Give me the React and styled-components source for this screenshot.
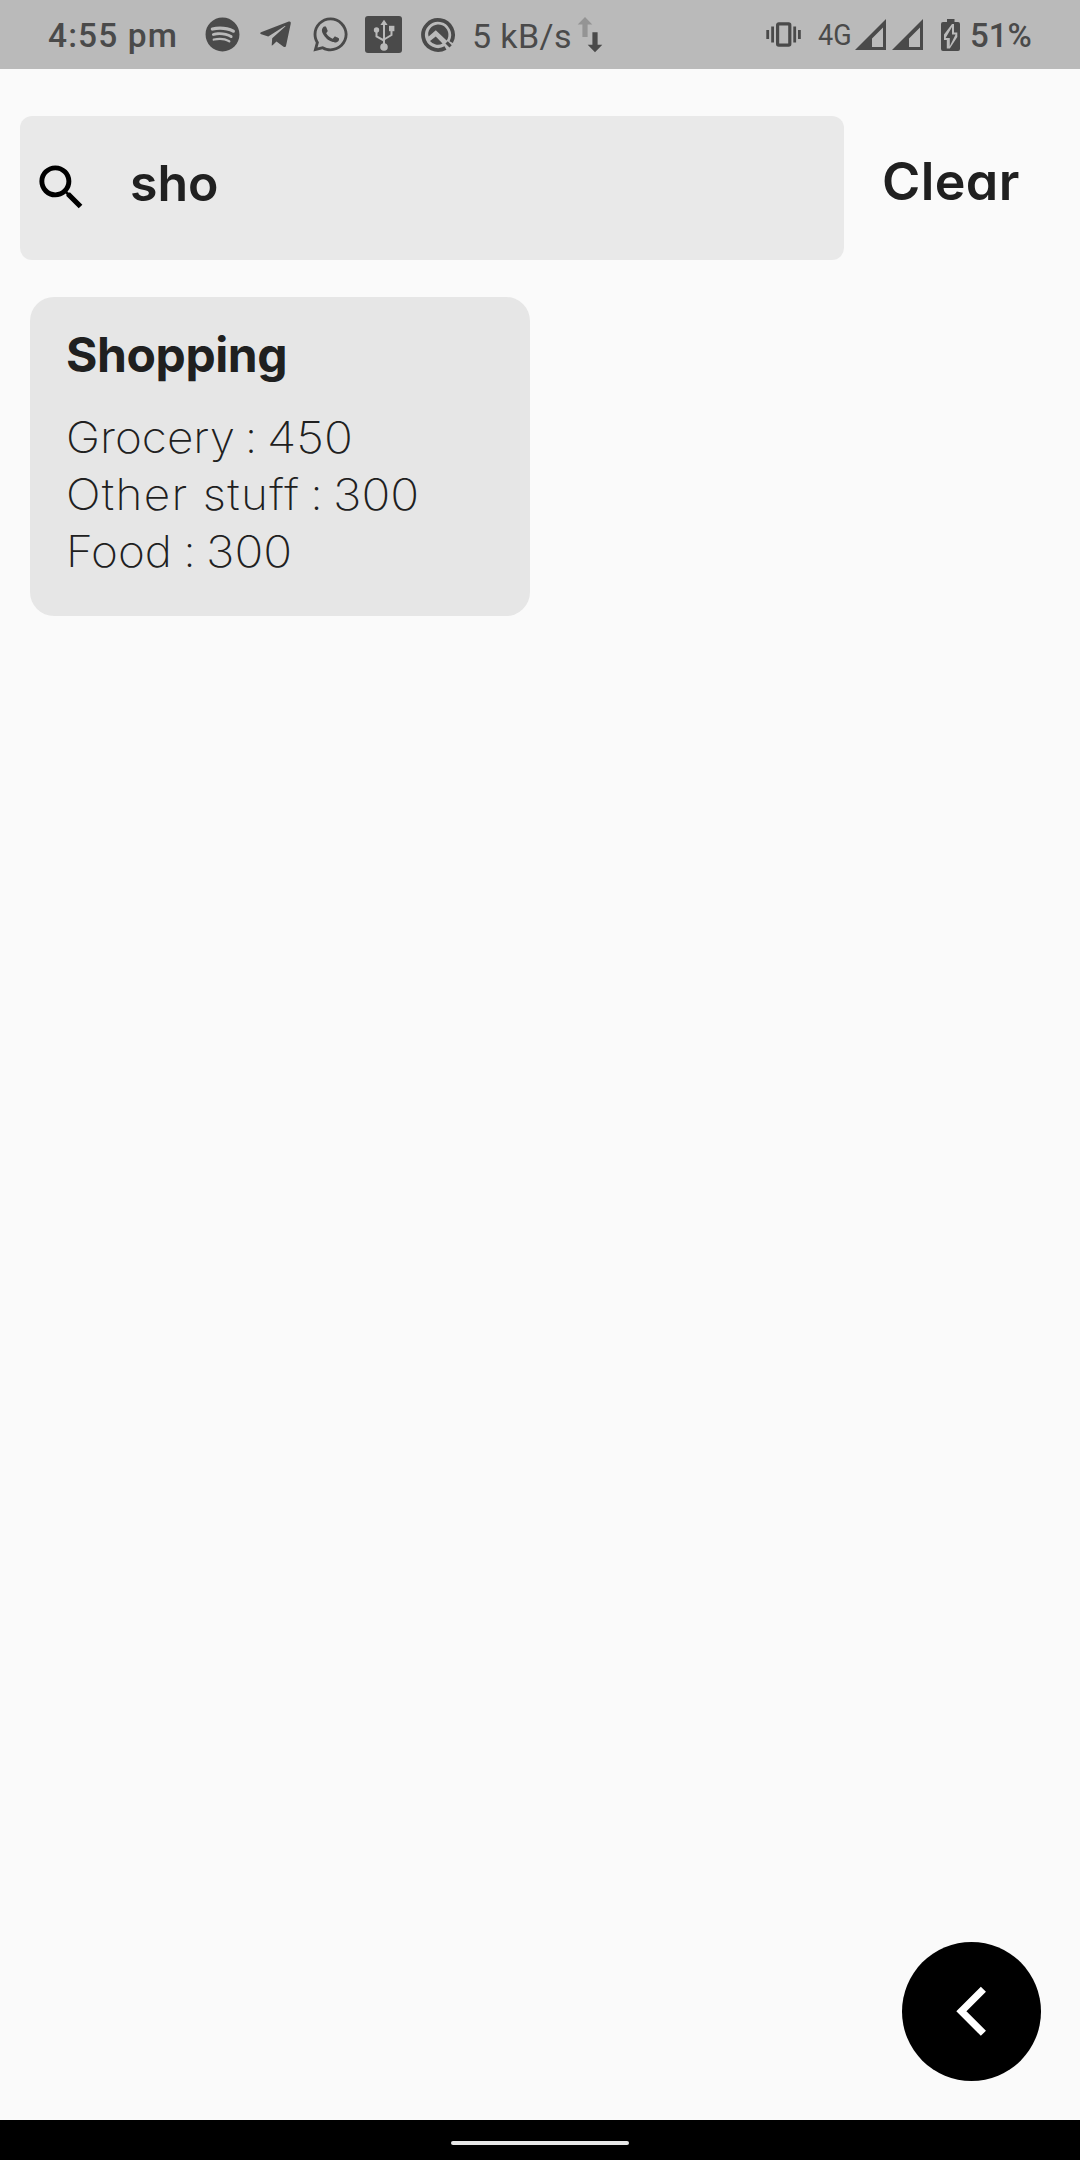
import React from "react";
import styled, { createGlobalStyle } from "styled-components";
import { FaSpotify, FaTelegramPlane, FaWhatsapp } from "react-icons/fa";
import { MdSearch } from "react-icons/md";

const GlobalStyle = createGlobalStyle`
  * { box-sizing: border-box; }
  body { margin: 0; background: #fafafa; font-family: Inter, "Liberation Sans", sans-serif; color: #202020; }
`;

const Screen = styled.div`
  width: 1080px;
  height: 2160px;
  display: flex;
  flex-direction: column;
  background: #fafafa;
`;

const StatusBar = styled.header`
  height: 69px;
  flex: none;
  display: flex;
  justify-content: space-between;
  padding: 0 48px;
  background: #bababa;
  color: #4a4a4a;
  font-family: Roboto, sans-serif;
`;

const StatusGroup = styled.div`
  display: flex;
  align-items: center;
  height: 69px;
  svg { display: block; flex: none; }
`;

const StatusText = styled.span`
  font-size: ${(p) => p.$size}px;
  font-weight: ${(p) => p.$weight || 400};
  letter-spacing: ${(p) => p.$track || 0}px;
  width: ${(p) => p.$width}px;
  margin-left: ${(p) => p.$gap || 0}px;
  line-height: 40px;
  padding-top: 2px;
  white-space: nowrap;
`;

const NetworkLabel = styled(StatusText)`
  transform: scaleX(0.9);
  transform-origin: left;
  padding-top: 0;
`;

const StatusIcon = styled.span`
  display: flex;
  margin-left: ${(p) => p.$gap}px;
`;

const SearchRow = styled.div`
  display: flex;
  padding: 47px 20px 0;
`;

const SearchBox = styled.div`
  width: 824px;
  height: 143.5px;
  display: flex;
  align-items: center;
  padding-left: 12px;
  border-radius: 12px;
  background: #e9e9e9;
`;

const SearchIcon = styled(MdSearch)`
  width: 59px;
  height: 59px;
  color: #000;
`;

const Query = styled.span`
  margin-left: 39px;
  padding-bottom: 10px;
  font-size: 50px;
  font-weight: 600;
  line-height: 60px;
`;

const ClearButton = styled.button`
  height: 132px;
  margin-left: 38px;
  padding: 0;
  border: 0;
  background: none;
  color: #202020;
  font: 600 52px/60px Inter, sans-serif;
  font-feature-settings: "cv11";
  letter-spacing: 0.4px;
`;

const Results = styled.main`
  flex: 1;
  padding: 37.5px 30px 0;
`;

const NoteCard = styled.article`
  width: 500px;
  height: 319px;
  padding: 30px 36px;
  border-radius: 24px;
  background: #e6e6e6;
`;

const NoteTitle = styled.h2`
  margin: 0;
  font-size: 48px;
  font-weight: 650;
  line-height: 56px;
  letter-spacing: -0.4px;
`;

const NoteLines = styled.div`
  padding-top: 26px;
  font-size: 43.5px;
  font-weight: 200;
  line-height: 57px;
  font-feature-settings: "calt" 0;
`;

const NoteLine = styled.div`
  display: flex;
  white-space: pre;
`;

const Label = styled.span`
  width: ${(p) => p.$width}px;
  letter-spacing: ${(p) => p.$track}px;
  transform: scaleX(1.055);
  transform-origin: left;
`;

const Colon = styled.span`
  width: 22px;
`;

const Amount = styled.span`
  transform: scaleX(1.1);
  transform-origin: left;
`;

const BottomArea = styled.div`
  display: flex;
  justify-content: flex-end;
  padding: 0 39.5px 39.5px 0;
`;

const BackButton = styled.button`
  width: 139px;
  height: 139px;
  padding: 0;
  border: 0;
  border-radius: 50%;
  background: #000;
  svg { display: block; }
`;

const NavBar = styled.footer`
  height: 40px;
  flex: none;
  display: flex;
  justify-content: center;
  padding-top: 21px;
  background: #000;
`;

const NavPill = styled.div`
  width: 178px;
  height: 4px;
  border-radius: 2px;
  background: #e8e8e8;
`;

const UsbIcon = () => (
  <svg width="37" height="37" viewBox="0 0 37 37" fill="none">
    <rect width="37" height="37" rx="3" fill="#4a4a4a" />
    <g stroke="#bababa" strokeWidth="2">
      <path d="M19 8v22M11.5 15v5.5L19 24.5M26.5 13v6L19 23.5" />
    </g>
    <g fill="#bababa">
      <path d="M19 3.8 22.6 9h-7.2z" />
      <circle cx="11.5" cy="14" r="2.7" />
      <rect x="24" y="9.8" width="5.4" height="5.4" />
      <circle cx="19" cy="31" r="3.8" />
    </g>
  </svg>
);

const QIcon = () => (
  <svg width="36" height="36" viewBox="0 0 36 36" fill="none">
    <path d="M25.5 31A15 15 0 1 1 31.2 25.2" stroke="#4a4a4a" strokeWidth="3.8" />
    <path d="M8.2 16A10.2 10.2 0 1 1 26.6 23.6L15.8 13.2 8.6 19.6A10 10 0 0 1 8.2 16Z" fill="#4a4a4a" />
    <path d="M10 24 15.8 19.6 22.5 26.6A10 10 0 0 1 10 24Z" fill="#4a4a4a" />
    <path d="M26.6 25.4 30.6 29.4" stroke="#4a4a4a" strokeWidth="3.2" />
  </svg>
);

const TrafficIcon = () => (
  <svg width="26" height="36" viewBox="0 0 26 36">
    <path d="M8 0 15.3 7.5H10.6V20H5.4V7.5H.7z" fill="#949494" />
    <path d="M18 35.3 10.7 27.8h4.7V15.3h5.2v12.5h4.7z" fill="#4a4a4a" />
  </svg>
);

const VibrateIcon = () => (
  <svg width="35" height="25" viewBox="0 0 35 25" fill="none">
    <rect x="11.6" y="1.8" width="12.2" height="21.4" rx="1.2" stroke="#4a4a4a" strokeWidth="3.2" />
    <path d="M1.7 8v9M6.6 4.5v16M28.7 4.5v16M33.4 8v9" stroke="#4a4a4a" strokeWidth="2.8" />
  </svg>
);

const SignalIcon = () => (
  <svg width="31" height="31" viewBox="0 0 31 31">
    <path d="M31 0V31H0zM28 8.5 17 19.5V28H28z" fill="#4a4a4a" fillRule="evenodd" />
  </svg>
);

const BatteryIcon = () => (
  <svg width="19" height="32" viewBox="0 0 19 32">
    <path d="M6 0h7.5v3H17a2 2 0 0 1 2 2v25a2 2 0 0 1-2 2H2a2 2 0 0 1-2-2V5a2 2 0 0 1 2-2h4z" fill="#4a4a4a" />
    <path d="M11 5 3 15.5v5.5h2.8v8.5h3L16.3 18v-4.5H13V5z" fill="#bababa" />
    <path d="M11 8 4.6 19h4.2v8.2L14.6 15.4H11z" fill="#4a4a4a" />
  </svg>
);

const ChevronIcon = () => (
  <svg width="139" height="139" viewBox="0 0 139 139" fill="none">
    <path d="M81.4 47.3 59.4 69.3 81.4 91.3" stroke="#fff" strokeWidth="7.2" />
  </svg>
);

const items = [
  { label: "Grocery", track: 0, colonAt: 179, amount: 450 },
  { label: "Other stuff", track: 1.25, colonAt: 244.5, amount: 300 },
  { label: "Food", track: 0, colonAt: 117.5, amount: 300 },
];

export default function App() {
  return (
    <>
      <GlobalStyle />
      <Screen>
        <StatusBar>
          <StatusGroup>
            <StatusText $size={33.5} $weight={500} $track={1.1} $width={157}>4:55 pm</StatusText>
            <StatusIcon $gap={0}><FaSpotify size={35} /></StatusIcon>
            <StatusIcon $gap={18}><FaTelegramPlane size={35} /></StatusIcon>
            <StatusIcon $gap={18}><FaWhatsapp size={39} /></StatusIcon>
            <StatusIcon $gap={15}><UsbIcon /></StatusIcon>
            <StatusIcon $gap={18}><QIcon /></StatusIcon>
            <StatusText $size={34} $track={0.4} $gap={16} $width={106}>5 kB/s</StatusText>
            <StatusIcon $gap={-1}><TrafficIcon /></StatusIcon>
          </StatusGroup>
          <StatusGroup>
            <StatusIcon $gap={0}><VibrateIcon /></StatusIcon>
            <NetworkLabel $size={30} $gap={17} $width={37}>4G</NetworkLabel>
            <StatusIcon $gap={0}><SignalIcon /></StatusIcon>
            <StatusIcon $gap={6}><SignalIcon /></StatusIcon>
            <StatusIcon $gap={18}><BatteryIcon /></StatusIcon>
            <StatusText $size={33} $weight={500} $gap={10} $width={62}>51%</StatusText>
          </StatusGroup>
        </StatusBar>
        <SearchRow>
          <SearchBox>
            <SearchIcon />
            <Query>sho</Query>
          </SearchBox>
          <ClearButton>Clear</ClearButton>
        </SearchRow>
        <Results>
          <NoteCard>
            <NoteTitle>Shopping</NoteTitle>
            <NoteLines>
              {items.map((item) => (
                <NoteLine key={item.label}>
                  <Label $track={item.track} $width={item.colonAt}>{item.label}</Label>
                  <Colon>:</Colon>
                  <Amount>{item.amount}</Amount>
                </NoteLine>
              ))}
            </NoteLines>
          </NoteCard>
        </Results>
        <BottomArea>
          <BackButton aria-label="Back"><ChevronIcon /></BackButton>
        </BottomArea>
        <NavBar><NavPill /></NavBar>
      </Screen>
    </>
  );
}
